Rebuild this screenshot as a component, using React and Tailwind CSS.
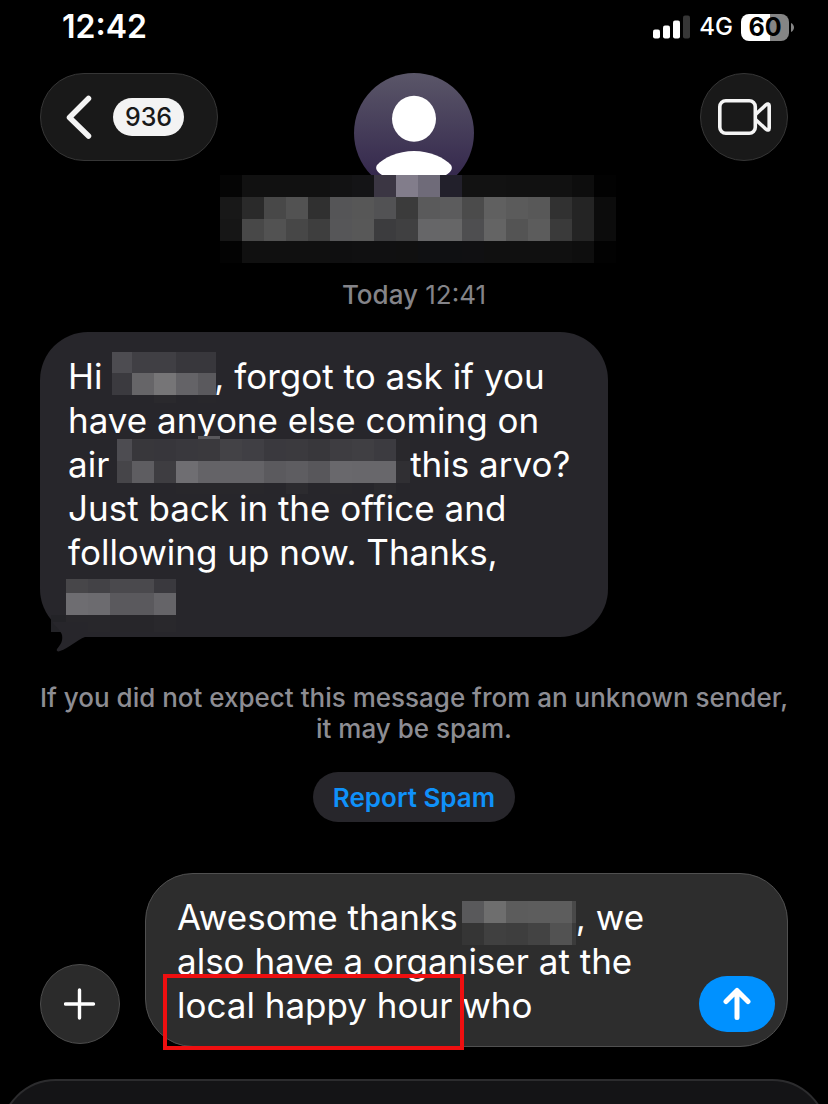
import React, { useState } from "react";

const HEADER_MOSAIC = {
    cols: Array(18).fill(22),
    rows: [22, 22, 22, 22],
    cells: [
        ["#050505", "#111111", "#111111", "#111111", "#111111", "#121213", "#141416", "#3b3643", "#827d8b", "#6f6b79", "#22202b", "#121212", "#121212", "#111111", "#111111", "#111111", "#0d0d0d", "#020202"],
        ["#181818", "#2a2a2a", "#484848", "#525252", "#303030", "#555557", "#575757", "#525254", "#3b3b3b", "#5a5a5b", "#5c5c5d", "#4b4b4b", "#606060", "#5b5b5b", "#585858", "#313131", "#242424", "#0c0c0c"],
        ["#161616", "#484848", "#525252", "#474747", "#3e3e3e", "#565658", "#585858", "#3c3c3e", "#404041", "#666668", "#666667", "#4e4e50", "#646464", "#545454", "#5c5c5c", "#3a3a3a", "#242424", "#0c0c0c"],
        ["#030303", "#101010", "#101010", "#101010", "#101010", "#0f0f10", "#101011", "#101011", "#101010", "#0f1012", "#0f1012", "#101012", "#101010", "#101010", "#101010", "#101010", "#0e0e0e", "#020202"],
    ],
};

const NAME_MOSAIC = {
    cols: [20, 22, 22, 22, 18],
    rows: [21, 22, 8],
    cells: [
        ["#4d4c51", "#403f44", "#403f44", "#38373c", "#38373c"],
        ["#3b3a3f", "#666568", "#767577", "#646367", "#5a595d"],
        [null, null, "#2a292d", null, "#28272b"],
    ],
};

const PLACE_MOSAIC = {
    cols: [15, 22, 22, 22, 22, 22, 22, 22, 22, 22, 22, 22, 22, 14],
    rows: [3, 22, 22, 11],
    cells: [
        [null, null, null, null, "#59585c"],
        ["#4d4c51", "#38373b", "#37363b", "#39383d", "#3a393d", "#434246", "#403f44", "#3a393e", "#3b3a3e", "#38373b", "#3e3d41", "#403f43", "#3c3b40", "#29282c"],
        ["#464549", "#5e5d61", "#3e3d41", "#6f6e72", "#646367", "#646367", "#646367", "#5b5a5e", "#5e5d61", "#58575b", "#69686c", "#68676b", "#68676b", "#302f33"],
        [null, null, null, "#28272b", "#28272b", "#28272b", "#28272b", null, "#2c2b2f", null, "#28272b", null, "#2b2a2e"],
    ],
};

const SIGNATURE_MOSAIC = {
    cols: [15, 22, 22, 22, 22, 22],
    rows: [14, 22, 17],
    cells: [
        [null, "#474649", "#434246", "#4a494d", "#4a494d", "#3a393e"],
        [null, "#6e6d71", "#6c6b6f", "#5a595d", "#5a595d", "#656468"],
        ["#232327", "#28272b", "#28272b", "#27262a", "#27262a", "#29282c"],
    ],
};

const DRAFT_MOSAIC = {
    cols: [22, 22, 22, 22, 22, 4],
    rows: [22, 22],
    cells: [
        ["#59595b", "#6e6e6e", "#5c5c5c", "#5d5d5d", "#5d5d5d", "#494949"],
        ["#353535", "#404040", "#3e3e3e", "#434343", "#525252", "#3b3b3b"],
    ],
};

const sum = (list) => list.reduce((a, b) => a + b, 0);

// Pixelated block that hides a name
const Mosaic = ({ data, className = "" }) => {
    const width = sum(data.cols);
    const height = sum(data.rows);

    return (
        <svg
            width={width}
            height={height}
            viewBox={`0 0 ${width} ${height}`}
            shapeRendering="crispEdges"
            className={`block max-w-none ${className}`}
            aria-hidden="true"
        >
            {data.cells.map((row, r) =>
                row.map((fill, c) =>
                    fill ? (
                        <rect
                            key={`${r}-${c}`}
                            x={sum(data.cols.slice(0, c))}
                            y={sum(data.rows.slice(0, r))}
                            width={data.cols[c]}
                            height={data.rows[r]}
                            fill={fill}
                        />
                    ) : null
                )
            )}
        </svg>
    );
};

const StatusBar = () => (
    <div className="flex h-[73px] shrink-0 items-start justify-between pl-[62px] pr-[34px] pt-2">
        <span className="text-[32px] leading-[38px] font-semibold">12:42</span>
        <div className="flex h-[38px] items-center gap-2">
            <svg width="38" height="24" viewBox="0 0 38 24" aria-hidden="true">
                <rect x="0" y="14.5" width="7" height="9" rx="2" fill="#fff" />
                <rect x="10" y="10.5" width="7" height="13" rx="2" fill="#fff" />
                <rect x="20" y="5.5" width="7" height="18" rx="2" fill="#fff" />
                <rect x="30" y="0.5" width="7" height="23" rx="2" fill="#363636" />
            </svg>
            <span className="text-[24px] leading-[38px] font-medium">4G</span>
            <div className="flex items-center gap-[2px]">
                <span className="flex h-[27px] w-12 items-center justify-center rounded-lg bg-linear-to-r from-white from-60% to-[#858585] to-60% text-[25px] leading-[27px] font-bold text-black">
                    60
                </span>
                <svg width="3" height="9" viewBox="0 0 3 9" aria-hidden="true">
                    <path d="M0 0C2 1 3 2.6 3 4.5S2 8 0 9Z" fill="#858585" />
                </svg>
            </div>
        </div>
    </div>
);

const Header = () => (
    <header className="flex h-[206px] shrink-0 items-start justify-between px-10">
        <div className="flex flex-1">
            <button
                aria-label="Back, 936 unread"
                className="flex h-[88px] w-[178px] items-center rounded-full border border-[#363636] bg-[#191919] pl-[25px]"
            >
                <svg width="26" height="44" viewBox="0 0 26 44" fill="none" aria-hidden="true">
                    <path d="M22.5 3.5 3.5 22.5 22.5 41" stroke="#f4f4f4" strokeWidth="5.5" strokeLinecap="round" strokeLinejoin="round" />
                </svg>
                <span className="ml-[21px] flex h-[38px] w-[71px] items-center justify-center rounded-full bg-[#f3f3f3] text-[25px] leading-[38px] font-medium text-[#191919]">
                    936
                </span>
            </button>
        </div>

        <div className="relative flex w-[120px] justify-center">
            <svg width="120" height="120" viewBox="0 0 120 120" aria-hidden="true">
                <defs>
                    <linearGradient id="avatar" x1="0" y1="0" x2="0" y2="1">
                        <stop offset="0" stopColor="#5a5668" />
                        <stop offset="1" stopColor="#2f2149" />
                    </linearGradient>
                    <clipPath id="avatarCut">
                        <rect width="120" height="102" />
                    </clipPath>
                </defs>
                <g clipPath="url(#avatarCut)">
                    <circle cx="60" cy="60" r="60" fill="url(#avatar)" />
                    <ellipse cx="60" cy="45.7" rx="22" ry="23" fill="#fff" />
                    <path d="M60 78C76 78 90 84.5 97 92C99 95 97.5 99 92 102L28 102C22.5 99 21 95 23 92C30 84.5 44 78 60 78Z" fill="#fff" />
                </g>
            </svg>
            <Mosaic data={HEADER_MOSAIC} className="absolute top-[102px] left-1/2 -translate-x-[194px]" />
        </div>

        <div className="flex flex-1 justify-end">
            <button
                aria-label="Video call"
                className="flex size-[88px] items-center justify-center rounded-full border border-[#363636] bg-[#191919]"
            >
                <svg width="54" height="38" viewBox="0 0 54 38" fill="none" stroke="#f4f4f4" strokeWidth="3.6" strokeLinejoin="round" aria-hidden="true">
                    <rect x="2.8" y="2.8" width="35.5" height="32.4" rx="6" />
                    <path d="M38.5 16.5 49 6.8C50.5 5.5 52.2 5.8 52.2 7.8V30.2C52.2 32.2 50.5 32.5 49 31.2L38.5 21.5" />
                </svg>
            </button>
        </div>
    </header>
);

const MessageBubble = () => (
    <div className="relative mt-[22px] w-[76%] rounded-[48px] bg-[#27262b] px-7 pt-[22px] pb-[19px] text-[35px] leading-[44px]">
        <p>
            Hi{" "}
            <span className="relative inline-block h-6 w-[102px]">
                <Mosaic data={NAME_MOSAIC} className="absolute -top-[13px] left-0" />
            </span>
            , forgot to ask if you
            <br />
            have anyone else coming on
            <br />
            air{" "}
            <span className="relative inline-block h-6 w-[291px]">
                <Mosaic data={PLACE_MOSAIC} className="absolute -top-[17px] -left-0.5" />
            </span>
            this arvo?
            <br />
            Just back in the office and
            <br />
            following up now. Thanks,
            <br />
            <span className="relative inline-block h-6 w-[108px]">
                <Mosaic data={SIGNATURE_MOSAIC} className="absolute -top-[6px] -left-[17px]" />
            </span>
        </p>
        <svg width="36" height="30" viewBox="0 0 36 30" className="absolute -bottom-[15px] left-3" aria-hidden="true">
            <path d="M0 0C5 6 9 9 10 13C11 19 9 22 5 27C4 29 6 30 8 29C17 26 25 18 33 15H36V0Z" fill="#27262b" />
        </svg>
    </div>
);

const ComposeBar = () => {
    const [draft, setDraft] = useState(
        `Awesome thanks${"\u00a0".repeat(12)}, we\nalso have a organiser at the\nlocal happy hour who`
    );

    return (
        <div className="mt-[51px] flex shrink-0 items-end gap-[25px] px-10">
            <button
                aria-label="Add"
                className="mb-[3px] flex size-20 shrink-0 items-center justify-center rounded-full border border-[#4c4c4c] bg-[#2b2b2b]"
            >
                <svg width="32" height="32" viewBox="0 0 32 32" fill="none" aria-hidden="true">
                    <path d="M15.5 2V30M1.5 16H29.5" stroke="#fff" strokeWidth="3.4" strokeLinecap="round" />
                </svg>
            </button>

            <div className="relative flex min-w-0 flex-1 items-end rounded-[48px] border border-[#505050] bg-[#2d2d2d] pt-[21px] pr-3 pb-[19px] pl-[31px]">
                <textarea
                    aria-label="Message"
                    rows={3}
                    value={draft}
                    onChange={(e) => setDraft(e.target.value)}
                    className="block min-w-0 flex-1 resize-none overflow-hidden bg-transparent text-[35px] leading-[44px] text-white outline-none"
                />
                <Mosaic data={DRAFT_MOSAIC} className="absolute top-[27px] left-[316px]" />
                <button
                    aria-label="Send"
                    className="-mb-[5px] flex h-14 w-[76px] shrink-0 items-center justify-center rounded-full bg-[#0091ff]"
                >
                    <svg width="28" height="34" viewBox="0 0 28 34" fill="none" aria-hidden="true">
                        <path d="M14 30.5V3.5M3 14.5 14 3.5 25 14.5" stroke="#fff" strokeWidth="5" strokeLinecap="round" strokeLinejoin="round" />
                    </svg>
                </button>
                {/* Highlight around the mistaken words */}
                <div className="pointer-events-none absolute top-[100px] left-[17px] h-[76px] w-[301px] border-4 border-[#ee0f10]" />
            </div>
        </div>
    );
};

const App = () => {
    return (
        <div className="flex h-screen flex-col overflow-hidden bg-black font-['Inter',sans-serif] text-white">
            <StatusBar />
            <Header />

            <main className="shrink-0 px-10">
                <p className="text-center text-[26px] leading-[31px] text-[#848489]">
                    <span className="font-medium">Today</span> 12:41
                </p>
                <MessageBubble />
                <p className="-mx-4 mt-[45px] text-center text-[26px] leading-[31px] font-medium text-[#8d8d93]">
                    If you did not expect this message from an unknown sender,
                    <br />
                    it may be spam.
                </p>
                <div className="mt-7 flex justify-center">
                    <button className="h-[50px] rounded-full bg-[#27262b] px-5 text-[26px] leading-[31px] font-semibold text-[#0f91f9]">
                        Report Spam
                    </button>
                </div>
            </main>

            <ComposeBar />

            {/* Top edge of the keyboard */}
            <div className="mt-8 h-40 shrink-0 rounded-t-[56px] border-2 border-[#2c2c2e] bg-[#141416]" />
        </div>
    );
};

export default App;
